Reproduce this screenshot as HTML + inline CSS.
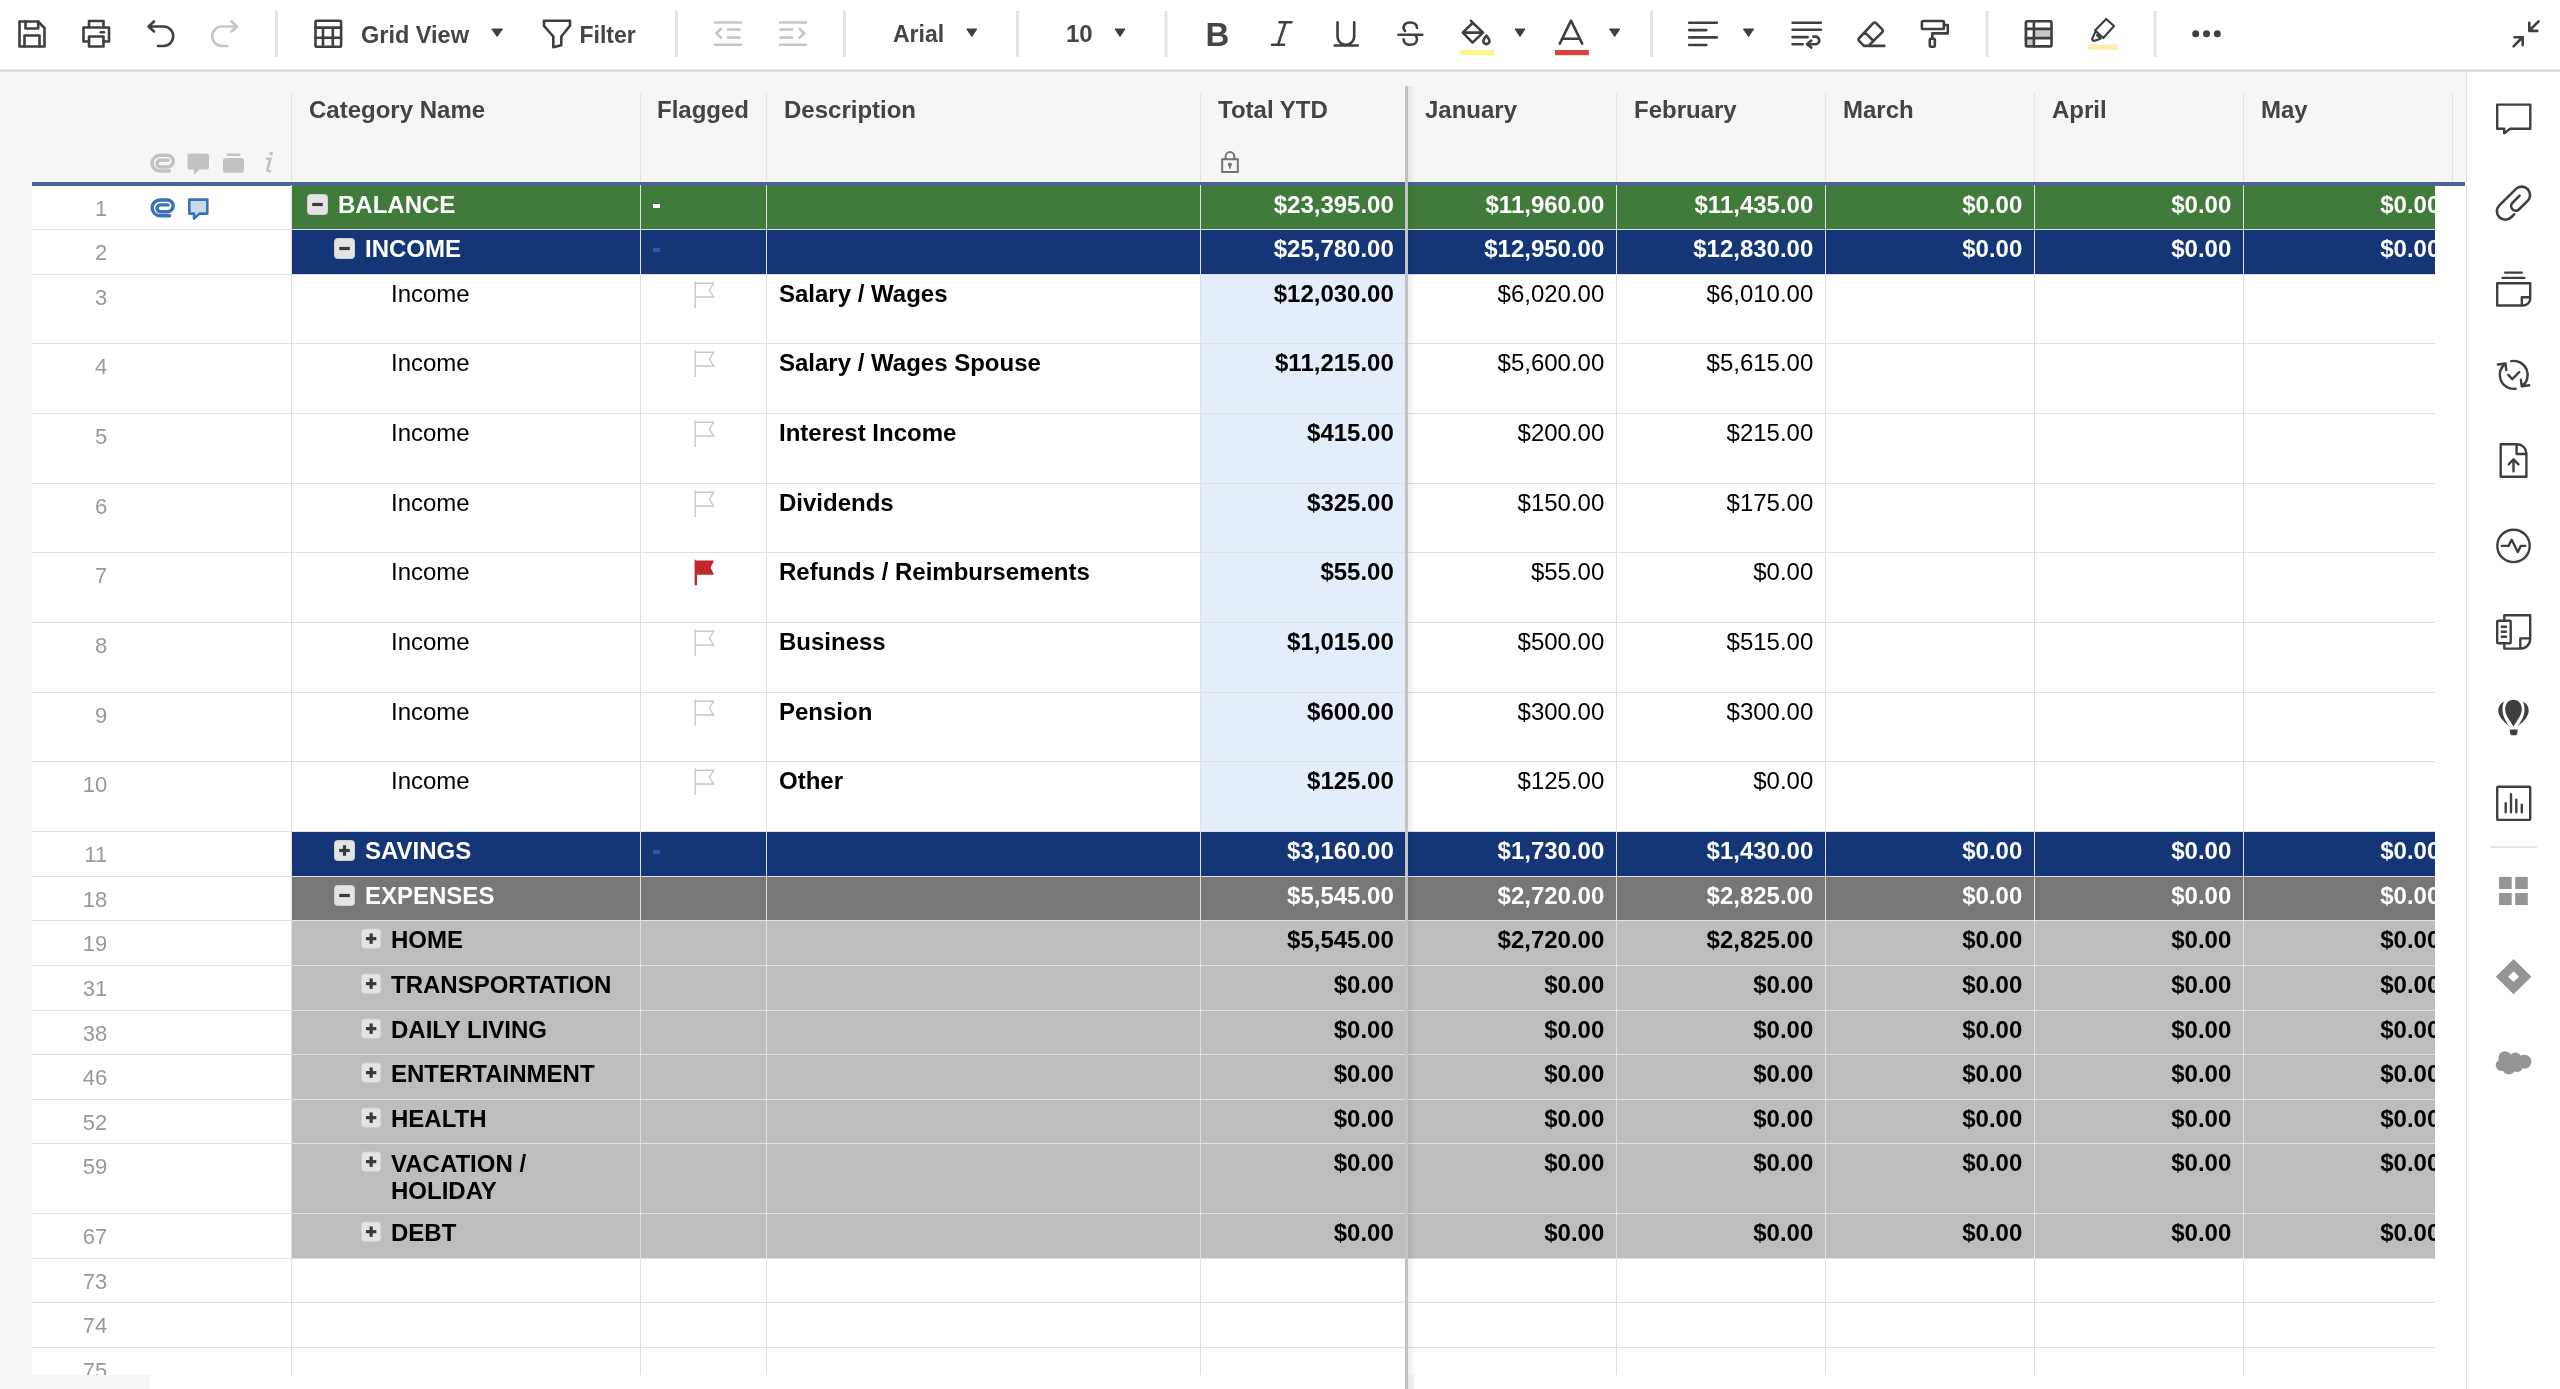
<!DOCTYPE html>
<html><head><meta charset="utf-8"><style>
html,body{margin:0;padding:0;}
body{width:2560px;height:1389px;overflow:hidden;position:relative;background:#fff;font-family:"Liberation Sans",sans-serif;}
#root{position:absolute;left:0;top:0;width:2560px;height:1389px;overflow:hidden;will-change:transform;}
#root>div{position:absolute;}
.t{white-space:nowrap;}
</style></head><body><div id="root">
<div style="left:0px;top:0px;width:2560px;height:70px;background:#ffffff;"></div><div style="left:0px;top:69px;width:2560px;height:1px;background:#ededed;"></div><div style="left:0px;top:70px;width:2560px;height:1px;background:#d3d3d3;"></div><div style="left:0px;top:71px;width:2560px;height:1px;background:#e4e2e0;"></div><div style="left:0px;top:72px;width:2466px;height:1317px;background:#f7f6f4;"></div><div style="left:2466px;top:72px;width:1px;height:1317px;background:#e2e2e2;"></div><div style="left:2467px;top:72px;width:93px;height:1317px;background:#ffffff;"></div><svg style="position:absolute;left:0px;top:0px;" width="2560" height="70" viewBox="0 0 2560 70"><path fill="none" stroke="#3f3f3f" stroke-width="2.6" stroke-linecap="round" stroke-linejoin="round" d="M19.5,21.5 H38 L44.5,28 V46.5 H19.5 Z"/><path fill="none" stroke="#3f3f3f" stroke-width="2.6" stroke-linecap="round" stroke-linejoin="round" d="M25.5,21.5 V28.5 H38.2 V21.5"/><path fill="none" stroke="#3f3f3f" stroke-width="2.6" stroke-linecap="round" stroke-linejoin="round" d="M24.5,46.5 V35.5 H39.5 V46.5"/><path fill="none" stroke="#3f3f3f" stroke-width="2.6" stroke-linecap="round" stroke-linejoin="round" d="M89,27 V21 H103.5 V27"/><path fill="none" stroke="#3f3f3f" stroke-width="2.6" stroke-linecap="round" stroke-linejoin="round" d="M89,41.5 H83.5 V27.5 H109 V41.5 H103.5"/><path fill="none" stroke="#3f3f3f" stroke-width="2.6" stroke-linecap="round" stroke-linejoin="round" d="M89,36.5 H103.5 V46.5 H89 Z"/><path fill="none" stroke="#3f3f3f" stroke-width="2.6" stroke-linecap="round" stroke-linejoin="round" d="M100.8,32.3 H104"/><path fill="none" stroke="#3f3f3f" stroke-width="2.6" stroke-linecap="round" stroke-linejoin="round" d="M154,21.5 L148.5,26.5 L154,31.5 M148.5,26.5 H163.5 A9.7,9.7 0 0 1 163.5,46 H158"/><path fill="none" stroke="#c6c6c6" stroke-width="2.6" stroke-linecap="round" stroke-linejoin="round" d="M231.5,21.5 L237,26.5 L231.5,31.5 M237,26.5 H222 A9.7,9.7 0 0 0 222,46 H227.5"/><rect fill="none" stroke="#3f3f3f" stroke-width="2.6" stroke-linecap="round" stroke-linejoin="round" x="315.5" y="20.8" width="25.6" height="26" rx="1"/><path fill="none" stroke="#3f3f3f" stroke-width="2.6" stroke-linecap="round" stroke-linejoin="round" d="M315.5,27.6 H341 M315.5,37.8 H341 M323,27.6 V46.8 M332.8,27.6 V46.8"/><path fill="none" stroke="#3f3f3f" stroke-width="2.6" stroke-linecap="round" stroke-linejoin="round" d="M544,20.8 H570 V25.8 L561.3,36.5 V45.3 L553.3,47.3 V36.5 L544,25.8 Z"/><path fill="none" stroke="#c6c6c6" stroke-width="2.6" stroke-linecap="round" stroke-linejoin="round" d="M715,22.5 H741 M728,29.5 H739.5 M728,37.6 H739.5 M715,44.7 H741 M721,28.8 L716.3,33.3 L721,37.8"/><path fill="none" stroke="#c6c6c6" stroke-width="2.6" stroke-linecap="round" stroke-linejoin="round" d="M780,22.5 H806 M780.5,29.5 H792 M780.5,37.6 H792 M780,44.7 H806 M799.5,28.8 L804.2,33.3 L799.5,37.8"/><path fill="none" stroke="#3f3f3f" stroke-width="2.6" stroke-linecap="round" stroke-linejoin="round" d="M1279.5,22.3 H1291.5 M1272,44.8 H1284 M1285.5,22.3 L1278,44.8"/><path fill="none" stroke="#3f3f3f" stroke-width="2.6" stroke-linecap="round" stroke-linejoin="round" d="M1337.5,22.3 V36.5 A8.3,8.3 0 0 0 1354.2,36.5 V22.3 M1334.7,45.5 H1357.7"/><path fill="none" stroke="#3f3f3f" stroke-width="2.6" stroke-linecap="round" stroke-linejoin="round" d="M1398.5,34.8 H1422.3"/><path fill="none" stroke="#3f3f3f" stroke-width="2.6" stroke-linecap="round" stroke-linejoin="round" d="M1405,31 C1402.5,28.5 1403,22.5 1410.3,22.5 C1414.8,22.5 1416.8,25 1417,27.8"/><path fill="none" stroke="#3f3f3f" stroke-width="2.6" stroke-linecap="round" stroke-linejoin="round" d="M1403.6,39.4 C1403.6,42.5 1406,44.8 1410.2,44.8 C1414.8,44.8 1417,42.2 1417,39.3 C1417,37.6 1416.6,36.6 1415.8,35.8"/><path fill="none" stroke="#3f3f3f" stroke-width="2.6" stroke-linecap="round" stroke-linejoin="round" d="M1471,20.8 L1473,23 L1483,32.6 L1472.5,42.6 L1462.8,32.6 L1472.8,22.8 M1462.8,32.6 H1483"/><path fill="none" stroke="#3f3f3f" stroke-width="2.6" stroke-linecap="round" stroke-linejoin="round" d="M1486.4,35.6 C1484.5,38 1483.3,39.6 1483.3,41 A3.1,3.1 0 0 0 1489.5,41 C1489.5,39.6 1488.3,38 1486.4,35.6 Z"/><rect x="1460" y="50" width="34.2" height="5.2" fill="#fff68f"/><path fill="none" stroke="#3f3f3f" stroke-width="2.6" stroke-linecap="round" stroke-linejoin="round" d="M1559.8,43.6 L1571,20.6 L1582.2,43.6 M1563,38.7 H1578.8"/><rect x="1555" y="50" width="33.9" height="5.2" fill="#d9443a"/><path fill="none" stroke="#3f3f3f" stroke-width="2.6" stroke-linecap="round" stroke-linejoin="round" d="M1689.2,22.7 H1716.8 M1689.2,30.1 H1706.3 M1689.2,37.4 H1716.8 M1689.2,45 H1706.3"/><path fill="none" stroke="#3f3f3f" stroke-width="2.6" stroke-linecap="round" stroke-linejoin="round" d="M1792.6,22.7 H1820.8 M1792.6,29.8 H1820.8 M1792.6,37.1 H1807.6 M1792.6,44.2 H1802.6"/><path fill="none" stroke="#3f3f3f" stroke-width="2.6" stroke-linecap="round" stroke-linejoin="round" d="M1813.3,36.6 H1815.5 A3.8,3.8 0 0 1 1815.5,44.2 H1807 M1811.3,40.6 L1807,44.2 L1811.3,47.6"/><path fill="none" stroke="#3f3f3f" stroke-width="2.6" stroke-linecap="round" stroke-linejoin="round" d="M1864,45.9 L1859.3,41.2 Q1857.7,39.6 1859.3,38 L1873,23.3 Q1874.6,21.7 1876.2,23.3 L1882,29.1 Q1883.6,30.7 1882,32.3 L1868.5,45.9 M1864,45.9 H1884.3 M1864.8,32.4 L1872.6,40"/><rect fill="none" stroke="#3f3f3f" stroke-width="2.6" stroke-linecap="round" stroke-linejoin="round" x="1921.9" y="21" width="22" height="8" rx="1.3"/><path fill="none" stroke="#3f3f3f" stroke-width="2.6" stroke-linecap="round" stroke-linejoin="round" d="M1944,25 H1947.8 V33.4 H1932.3 V38.6"/><rect fill="none" stroke="#3f3f3f" stroke-width="2.6" stroke-linecap="round" stroke-linejoin="round" x="1929.8" y="38.8" width="5" height="8" rx="1"/><rect x="2035" y="30" width="16.2" height="7.5" fill="#c9c9c9"/><rect x="2026.5" y="39.2" width="7" height="7" fill="#c9c9c9"/><rect fill="none" stroke="#3f3f3f" stroke-width="2.6" stroke-linecap="round" stroke-linejoin="round" x="2025.9" y="21.2" width="25.6" height="25.2" rx="1.3"/><path fill="none" stroke="#3f3f3f" stroke-width="2.6" stroke-linecap="round" stroke-linejoin="round" d="M2025.9,28.9 H2051.5 M2025.9,38.1 H2051.5 M2033.9,21.2 V46.4"/><path fill="none" stroke="#3f3f3f" stroke-width="2.2" stroke-linejoin="round" stroke-linecap="round" d="M2095,30.4 L2106.2,19 L2114,26 L2103.3,38 Z M2095.6,31.4 L2092.2,38.6 Q2092,40.6 2094.6,40.8 L2100.6,38.8 M2097,35.2 L2100,37.6"/><rect x="2088.2" y="44.4" width="29.4" height="5.3" fill="#feedae"/><circle cx="2195.7" cy="33.8" r="3.5" fill="#3f3f3f"/><circle cx="2206.5" cy="33.8" r="3.5" fill="#3f3f3f"/><circle cx="2217.3" cy="33.8" r="3.5" fill="#3f3f3f"/><path fill="none" stroke="#3f3f3f" stroke-width="2.6" stroke-linecap="round" stroke-linejoin="round" d="M2538.6,21.3 L2530,30 M2529.3,22.7 V30.9 H2537.3 M2513.6,46.3 L2522.2,37.5 M2514.5,37.2 H2522.7 V45.1"/><rect x="275.0" y="11" width="3" height="46" fill="#e3e3e3"/><rect x="675.0" y="11" width="3" height="46" fill="#e3e3e3"/><rect x="843.0" y="11" width="3" height="46" fill="#e3e3e3"/><rect x="1016.0" y="11" width="3" height="46" fill="#e3e3e3"/><rect x="1164.5" y="11" width="3" height="46" fill="#e3e3e3"/><rect x="1650.0" y="11" width="3" height="46" fill="#e3e3e3"/><rect x="1985.5" y="11" width="3" height="46" fill="#e3e3e3"/><rect x="2153.5" y="11" width="3" height="46" fill="#e3e3e3"/><path d="M491.8,29 H502.5 L497.15,36.5 Z" fill="#3f3f3f" stroke="#3f3f3f" stroke-width="1" stroke-linejoin="round"/><path d="M966.8,29 H976.8 L971.8,36.5 Z" fill="#3f3f3f" stroke="#3f3f3f" stroke-width="1" stroke-linejoin="round"/><path d="M1115,29 H1125 L1120.0,36.5 Z" fill="#3f3f3f" stroke="#3f3f3f" stroke-width="1" stroke-linejoin="round"/><path d="M1515,29 H1525 L1520.0,36.5 Z" fill="#3f3f3f" stroke="#3f3f3f" stroke-width="1" stroke-linejoin="round"/><path d="M1609.5,29 H1619.8 L1614.65,36.5 Z" fill="#3f3f3f" stroke="#3f3f3f" stroke-width="1" stroke-linejoin="round"/><path d="M1743.4,29 H1753.7 L1748.5500000000002,36.5 Z" fill="#3f3f3f" stroke="#3f3f3f" stroke-width="1" stroke-linejoin="round"/></svg><div class="t" style="left:361px;top:23.90px;font-size:23.5px;line-height:23.5px;font-weight:700;color:#454545;">Grid View</div><div class="t" style="left:579.5px;top:23.53px;font-size:23px;line-height:23px;font-weight:700;color:#454545;">Filter</div><div class="t" style="left:893px;top:22.83px;font-size:23px;line-height:23px;font-weight:700;color:#454545;">Arial</div><div class="t" style="left:1066px;top:22.38px;font-size:24px;line-height:24px;font-weight:700;color:#454545;">10</div><div class="t" style="left:1205.5px;top:18.06px;font-size:33px;line-height:33px;font-weight:700;color:#454545;">B</div><svg style="position:absolute;left:2467px;top:71px;" width="93" height="1318" viewBox="2467 71 93 1318"><path fill="none" stroke="#3f3f3f" stroke-width="2.4" stroke-linecap="round" stroke-linejoin="round" d="M2497.2,104.6 H2530.3 V128.8 H2510.2 L2504.2,133.3 V128.8 H2497.2 Z"/><path fill="none" stroke="#3f3f3f" stroke-width="2.6" stroke-linecap="round" stroke-linejoin="round" d="M2514.2,214.3 L2511.24,217.24 A8.4,8.4 0 0 1 2499.36,205.36 L2515.76,189.06 A8.4,8.4 0 0 1 2527.64,200.94 L2518.85,209.45 A4.6,4.6 0 0 1 2512.35,202.95 L2519.6,195.7"/><path fill="none" stroke="#3f3f3f" stroke-width="2.4" stroke-linecap="round" stroke-linejoin="round" d="M2505.2,272.6 H2521.8 M2502.6,277.9 H2524.3"/><path fill="none" stroke="#3f3f3f" stroke-width="2.4" stroke-linecap="round" stroke-linejoin="round" d="M2497.2,283.2 H2530.2 V298.5 A7,7 0 0 1 2523.3,305.5 H2497.2 Z M2521.8,305.5 V297.3 H2530.2"/><path fill="none" stroke="#3f3f3f" stroke-width="2.4" stroke-linecap="round" stroke-linejoin="round" d="M2511.27,361.11 A14,14 0 0 1 2521.73,386.37 M2520.9,379.8 L2521.73,386.37 L2529.2,385.2"/><path fill="none" stroke="#3f3f3f" stroke-width="2.4" stroke-linecap="round" stroke-linejoin="round" d="M2515.65,388.76 A14,14 0 0 1 2505.57,363.5 M2497.9,364.5 L2505.57,363.5 L2506.3,370.1"/><path fill="none" stroke="#3f3f3f" stroke-width="2.4" stroke-linecap="round" stroke-linejoin="round" d="M2508.3,374.9 L2512.3,379.2 L2519.3,372"/><path fill="none" stroke="#3f3f3f" stroke-width="2.4" stroke-linecap="round" stroke-linejoin="round" d="M2500.7,444.2 H2517 A9.5,9.5 0 0 1 2526.4,453.5 V476.8 H2500.7 Z M2516.6,444.2 V454 H2526.4"/><path fill="none" stroke="#3f3f3f" stroke-width="2.4" stroke-linecap="round" stroke-linejoin="round" d="M2513.5,471.2 V459.5 M2508.8,464.3 L2513.5,459.3 L2518.5,464.3"/><circle fill="none" stroke="#3f3f3f" stroke-width="2.4" stroke-linecap="round" stroke-linejoin="round" cx="2513.5" cy="545.9" r="16.2"/><path fill="none" stroke="#3f3f3f" stroke-width="2.4" stroke-linecap="round" stroke-linejoin="round" d="M2501.8,545.9 H2508.5 L2511.7,539.8 L2517.8,552 L2520.8,545.9 H2525.2"/><path fill="none" stroke="#3f3f3f" stroke-width="2.4" stroke-linecap="round" stroke-linejoin="round" d="M2504.3,620.7 V615.2 H2530.2 V639 A9.6,9.6 0 0 1 2520.6,648.6 H2504.3 V643.3 M2520.3,648.6 V638.4 H2530.2"/><rect fill="none" stroke="#3f3f3f" stroke-width="2.4" stroke-linecap="round" stroke-linejoin="round" x="2497.2" y="620.7" width="13.5" height="22.6" rx="1"/><path fill="none" stroke="#3f3f3f" stroke-width="2.4" stroke-linecap="round" stroke-linejoin="round" d="M2501.8,626.7 H2506 M2501.8,631.8 H2506 M2501.8,636.8 H2506"/><path fill="#3f3f3f" d="M2513.5,699.8 C2508.3,699.8 2505.2,703.8 2505.2,709.3 C2505.2,715.5 2510.3,721 2513.5,726.5 C2516.7,721 2521.8,715.5 2521.8,709.3 C2521.8,703.8 2518.7,699.8 2513.5,699.8 Z"/><path fill="#3f3f3f" d="M2504,701.8 C2499.5,703.8 2498.3,708 2498.3,710.5 C2498.3,716.5 2503.5,721.5 2509.3,726.5 C2505.2,720.5 2502.5,715.5 2502.5,709.8 C2502.5,706.5 2503,704 2504,701.8 Z"/><path fill="#3f3f3f" d="M2523,701.8 C2527.5,703.8 2528.7,708 2528.7,710.5 C2528.7,716.5 2523.5,721.5 2517.7,726.5 C2521.8,720.5 2524.5,715.5 2524.5,709.8 C2524.5,706.5 2524,704 2523,701.8 Z"/><path fill="#3f3f3f" d="M2509.7,729.5 H2517.8 L2517,734 Q2516.6,735.2 2515.4,735.2 H2512 Q2510.6,735.2 2510.4,734 Z"/><rect fill="none" stroke="#3f3f3f" stroke-width="2.4" stroke-linecap="round" stroke-linejoin="round" x="2497.2" y="786.7" width="33" height="33.2" rx="1"/><path fill="none" stroke="#3f3f3f" stroke-width="2.4" stroke-linecap="round" stroke-linejoin="round" d="M2505.7,803.3 V812.3 M2511,794.2 V812.3 M2516.3,799.7 V812.3 M2521.8,804.8 V812.3"/><rect x="2490.5" y="846.3" width="46.4" height="1.6" fill="#e2e2e2"/><rect x="2499.1" y="876.9" width="12.6" height="12.1" fill="#959595"/><rect x="2515.2" y="876.9" width="12.6" height="12.1" fill="#959595"/><rect x="2499.1" y="893" width="12.6" height="12.1" fill="#959595"/><rect x="2515.2" y="893" width="12.6" height="12.1" fill="#959595"/><path fill="#959595" fill-rule="evenodd" d="M2513.6,958.9 L2531.4,976.7 L2513.6,994.3 L2495.8,976.7 Z M2513.6,971.3 L2508.2,976.7 L2513.6,982 L2519,976.7 Z"/><g fill="#959595"><circle cx="2505" cy="1058" r="6.7"/><circle cx="2515.3" cy="1059" r="6.5"/><circle cx="2524.4" cy="1061.8" r="7"/><circle cx="2501.5" cy="1065.3" r="5.7"/><circle cx="2508.8" cy="1067.8" r="6.6"/><circle cx="2517" cy="1066" r="6"/><rect x="2503" y="1058" width="22" height="9"/></g></svg><div class="t" style="left:309px;top:98.18px;font-size:24px;line-height:24px;font-weight:700;color:#444444;">Category Name</div><div class="t" style="left:657px;top:98.18px;font-size:24px;line-height:24px;font-weight:700;color:#444444;">Flagged</div><div class="t" style="left:784px;top:98.18px;font-size:24px;line-height:24px;font-weight:700;color:#444444;">Description</div><div class="t" style="left:1218px;top:98.18px;font-size:24px;line-height:24px;font-weight:700;color:#444444;">Total YTD</div><div class="t" style="left:1425px;top:98.18px;font-size:24px;line-height:24px;font-weight:700;color:#444444;">January</div><div class="t" style="left:1634px;top:98.18px;font-size:24px;line-height:24px;font-weight:700;color:#444444;">February</div><div class="t" style="left:1843px;top:98.18px;font-size:24px;line-height:24px;font-weight:700;color:#444444;">March</div><div class="t" style="left:2052px;top:98.18px;font-size:24px;line-height:24px;font-weight:700;color:#444444;">April</div><div class="t" style="left:2261px;top:98.18px;font-size:24px;line-height:24px;font-weight:700;color:#444444;">May</div><div style="left:291px;top:93px;width:1px;height:89px;background:#e4e4e4;"></div><div style="left:640px;top:93px;width:1px;height:89px;background:#e4e4e4;"></div><div style="left:766px;top:93px;width:1px;height:89px;background:#e4e4e4;"></div><div style="left:1200px;top:93px;width:1px;height:89px;background:#e4e4e4;"></div><div style="left:1616px;top:93px;width:1px;height:89px;background:#e4e4e4;"></div><div style="left:1825px;top:93px;width:1px;height:89px;background:#e4e4e4;"></div><div style="left:2034px;top:93px;width:1px;height:89px;background:#e4e4e4;"></div><div style="left:2243px;top:93px;width:1px;height:89px;background:#e4e4e4;"></div><div style="left:2452px;top:93px;width:1px;height:89px;background:#e4e4e4;"></div><svg style="position:absolute;left:32px;top:71px;" width="1400" height="160" viewBox="32 71 1400 160"><path fill="none" stroke="#c2c2c2" stroke-width="3.4" stroke-linecap="round" d="M169.5,171 H159.95 A7.85,7.85 0 0 1 159.95,155.3 H167.35 A5.85,5.85 0 0 1 167.35,167 H160.4 A3.4,3.4 0 0 1 160.4,160.2 H168"/><path fill="#c2c2c2" d="M189.8,153.6 H206.8 Q209,153.6 209,155.8 V167.3 Q209,169.5 206.8,169.5 H199.5 L193.8,174.8 V169.5 H189.8 Q187.5,169.5 187.5,167.3 V155.8 Q187.5,153.6 189.8,153.6 Z"/><rect x="226.7" y="153.6" width="13.7" height="2.4" rx="1" fill="#c2c2c2"/><rect x="223" y="158" width="21" height="14.8" rx="2.6" fill="#c2c2c2"/><circle cx="271.2" cy="153.5" r="1.8" fill="#c2c2c2"/><path fill="none" stroke="#c2c2c2" stroke-width="2.6" stroke-linecap="round" d="M267,158.8 H270.3 L267.6,169 Q267.2,171.6 270,171.2"/><path fill="none" stroke="#737373" stroke-width="2" d="M1222.2,159.2 H1237.8 V171.9 H1222.2 Z M1225.6,159.2 V156.5 A4.4,4.4 0 0 1 1234.4,156.5 V159.2"/><circle cx="1229.9" cy="164.5" r="2" fill="#737373"/><path fill="#737373" d="M1228.8,165 H1231 L1230.6,168.8 H1229.2 Z"/></svg><div style="left:32px;top:182px;width:2433px;height:4px;background:#4b6496;"></div><div style="left:32px;top:186px;width:2403px;height:1189px;background:#ffffff;"></div><div class="t" style="right:2452.8px;top:197.87px;font-size:22px;line-height:22px;font-weight:400;color:#999999;text-align:right;">1</div><div style="left:292px;top:186px;width:2143px;height:43px;background:#417b3b;"></div><div class="t" style="left:338px;top:193.38px;font-size:24px;line-height:24px;font-weight:700;color:#ffffff;">BALANCE</div><div style="left:652.5px;top:204.3px;width:7.5px;height:3.8px;background:#ffffff;"></div><div class="t" style="right:1166.2px;top:193.38px;font-size:24px;line-height:24px;font-weight:700;color:#ffffff;text-align:right;">$23,395.00</div><div class="t" style="right:955.7px;top:193.38px;font-size:24px;line-height:24px;font-weight:700;color:#ffffff;text-align:right;">$11,960.00</div><div class="t" style="right:746.7px;top:193.38px;font-size:24px;line-height:24px;font-weight:700;color:#ffffff;text-align:right;">$11,435.00</div><div class="t" style="right:537.7px;top:193.38px;font-size:24px;line-height:24px;font-weight:700;color:#ffffff;text-align:right;">$0.00</div><div class="t" style="right:328.6999999999998px;top:193.38px;font-size:24px;line-height:24px;font-weight:700;color:#ffffff;text-align:right;">$0.00</div><div class="t" style="right:119.69999999999982px;top:193.38px;font-size:24px;line-height:24px;font-weight:700;color:#ffffff;text-align:right;">$0.00</div><div style="left:32px;top:229px;width:2403px;height:1px;background:#e0e0e0;"></div><div class="t" style="right:2452.8px;top:241.87px;font-size:22px;line-height:22px;font-weight:400;color:#999999;text-align:right;">2</div><div style="left:292px;top:230px;width:2143px;height:44px;background:#143677;"></div><div class="t" style="left:365px;top:237.38px;font-size:24px;line-height:24px;font-weight:700;color:#ffffff;">INCOME</div><div style="left:652.5px;top:248.3px;width:7.5px;height:3.8px;background:#2459b3;"></div><div class="t" style="right:1166.2px;top:237.38px;font-size:24px;line-height:24px;font-weight:700;color:#ffffff;text-align:right;">$25,780.00</div><div class="t" style="right:955.7px;top:237.38px;font-size:24px;line-height:24px;font-weight:700;color:#ffffff;text-align:right;">$12,950.00</div><div class="t" style="right:746.7px;top:237.38px;font-size:24px;line-height:24px;font-weight:700;color:#ffffff;text-align:right;">$12,830.00</div><div class="t" style="right:537.7px;top:237.38px;font-size:24px;line-height:24px;font-weight:700;color:#ffffff;text-align:right;">$0.00</div><div class="t" style="right:328.6999999999998px;top:237.38px;font-size:24px;line-height:24px;font-weight:700;color:#ffffff;text-align:right;">$0.00</div><div class="t" style="right:119.69999999999982px;top:237.38px;font-size:24px;line-height:24px;font-weight:700;color:#ffffff;text-align:right;">$0.00</div><div style="left:32px;top:274px;width:2403px;height:1px;background:#e0e0e0;"></div><div class="t" style="right:2452.8px;top:286.87px;font-size:22px;line-height:22px;font-weight:400;color:#999999;text-align:right;">3</div><div style="left:1201px;top:275px;width:204px;height:68px;background:#e3eefa;"></div><div class="t" style="left:391px;top:282.38px;font-size:24px;line-height:24px;font-weight:400;color:#000000;">Income</div><div class="t" style="left:779px;top:282.38px;font-size:24px;line-height:24px;font-weight:700;color:#000000;">Salary / Wages</div><div class="t" style="right:1166.2px;top:282.38px;font-size:24px;line-height:24px;font-weight:700;color:#000000;text-align:right;">$12,030.00</div><div class="t" style="right:955.7px;top:282.38px;font-size:24px;line-height:24px;font-weight:400;color:#000000;text-align:right;">$6,020.00</div><div class="t" style="right:746.7px;top:282.38px;font-size:24px;line-height:24px;font-weight:400;color:#000000;text-align:right;">$6,010.00</div><div style="left:32px;top:343px;width:2403px;height:1px;background:#e0e0e0;"></div><div class="t" style="right:2452.8px;top:355.87px;font-size:22px;line-height:22px;font-weight:400;color:#999999;text-align:right;">4</div><div style="left:1201px;top:344px;width:204px;height:69px;background:#e3eefa;"></div><div class="t" style="left:391px;top:351.38px;font-size:24px;line-height:24px;font-weight:400;color:#000000;">Income</div><div class="t" style="left:779px;top:351.38px;font-size:24px;line-height:24px;font-weight:700;color:#000000;">Salary / Wages Spouse</div><div class="t" style="right:1166.2px;top:351.38px;font-size:24px;line-height:24px;font-weight:700;color:#000000;text-align:right;">$11,215.00</div><div class="t" style="right:955.7px;top:351.38px;font-size:24px;line-height:24px;font-weight:400;color:#000000;text-align:right;">$5,600.00</div><div class="t" style="right:746.7px;top:351.38px;font-size:24px;line-height:24px;font-weight:400;color:#000000;text-align:right;">$5,615.00</div><div style="left:32px;top:413px;width:2403px;height:1px;background:#e0e0e0;"></div><div class="t" style="right:2452.8px;top:425.87px;font-size:22px;line-height:22px;font-weight:400;color:#999999;text-align:right;">5</div><div style="left:1201px;top:414px;width:204px;height:69px;background:#e3eefa;"></div><div class="t" style="left:391px;top:421.38px;font-size:24px;line-height:24px;font-weight:400;color:#000000;">Income</div><div class="t" style="left:779px;top:421.38px;font-size:24px;line-height:24px;font-weight:700;color:#000000;">Interest Income</div><div class="t" style="right:1166.2px;top:421.38px;font-size:24px;line-height:24px;font-weight:700;color:#000000;text-align:right;">$415.00</div><div class="t" style="right:955.7px;top:421.38px;font-size:24px;line-height:24px;font-weight:400;color:#000000;text-align:right;">$200.00</div><div class="t" style="right:746.7px;top:421.38px;font-size:24px;line-height:24px;font-weight:400;color:#000000;text-align:right;">$215.00</div><div style="left:32px;top:483px;width:2403px;height:1px;background:#e0e0e0;"></div><div class="t" style="right:2452.8px;top:495.87px;font-size:22px;line-height:22px;font-weight:400;color:#999999;text-align:right;">6</div><div style="left:1201px;top:484px;width:204px;height:68px;background:#e3eefa;"></div><div class="t" style="left:391px;top:491.38px;font-size:24px;line-height:24px;font-weight:400;color:#000000;">Income</div><div class="t" style="left:779px;top:491.38px;font-size:24px;line-height:24px;font-weight:700;color:#000000;">Dividends</div><div class="t" style="right:1166.2px;top:491.38px;font-size:24px;line-height:24px;font-weight:700;color:#000000;text-align:right;">$325.00</div><div class="t" style="right:955.7px;top:491.38px;font-size:24px;line-height:24px;font-weight:400;color:#000000;text-align:right;">$150.00</div><div class="t" style="right:746.7px;top:491.38px;font-size:24px;line-height:24px;font-weight:400;color:#000000;text-align:right;">$175.00</div><div style="left:32px;top:552px;width:2403px;height:1px;background:#e0e0e0;"></div><div class="t" style="right:2452.8px;top:564.87px;font-size:22px;line-height:22px;font-weight:400;color:#999999;text-align:right;">7</div><div style="left:1201px;top:553px;width:204px;height:69px;background:#e3eefa;"></div><div class="t" style="left:391px;top:560.38px;font-size:24px;line-height:24px;font-weight:400;color:#000000;">Income</div><div class="t" style="left:779px;top:560.38px;font-size:24px;line-height:24px;font-weight:700;color:#000000;">Refunds / Reimbursements</div><div class="t" style="right:1166.2px;top:560.38px;font-size:24px;line-height:24px;font-weight:700;color:#000000;text-align:right;">$55.00</div><div class="t" style="right:955.7px;top:560.38px;font-size:24px;line-height:24px;font-weight:400;color:#000000;text-align:right;">$55.00</div><div class="t" style="right:746.7px;top:560.38px;font-size:24px;line-height:24px;font-weight:400;color:#000000;text-align:right;">$0.00</div><div style="left:32px;top:622px;width:2403px;height:1px;background:#e0e0e0;"></div><div class="t" style="right:2452.8px;top:634.87px;font-size:22px;line-height:22px;font-weight:400;color:#999999;text-align:right;">8</div><div style="left:1201px;top:623px;width:204px;height:69px;background:#e3eefa;"></div><div class="t" style="left:391px;top:630.38px;font-size:24px;line-height:24px;font-weight:400;color:#000000;">Income</div><div class="t" style="left:779px;top:630.38px;font-size:24px;line-height:24px;font-weight:700;color:#000000;">Business</div><div class="t" style="right:1166.2px;top:630.38px;font-size:24px;line-height:24px;font-weight:700;color:#000000;text-align:right;">$1,015.00</div><div class="t" style="right:955.7px;top:630.38px;font-size:24px;line-height:24px;font-weight:400;color:#000000;text-align:right;">$500.00</div><div class="t" style="right:746.7px;top:630.38px;font-size:24px;line-height:24px;font-weight:400;color:#000000;text-align:right;">$515.00</div><div style="left:32px;top:692px;width:2403px;height:1px;background:#e0e0e0;"></div><div class="t" style="right:2452.8px;top:704.87px;font-size:22px;line-height:22px;font-weight:400;color:#999999;text-align:right;">9</div><div style="left:1201px;top:693px;width:204px;height:68px;background:#e3eefa;"></div><div class="t" style="left:391px;top:700.38px;font-size:24px;line-height:24px;font-weight:400;color:#000000;">Income</div><div class="t" style="left:779px;top:700.38px;font-size:24px;line-height:24px;font-weight:700;color:#000000;">Pension</div><div class="t" style="right:1166.2px;top:700.38px;font-size:24px;line-height:24px;font-weight:700;color:#000000;text-align:right;">$600.00</div><div class="t" style="right:955.7px;top:700.38px;font-size:24px;line-height:24px;font-weight:400;color:#000000;text-align:right;">$300.00</div><div class="t" style="right:746.7px;top:700.38px;font-size:24px;line-height:24px;font-weight:400;color:#000000;text-align:right;">$300.00</div><div style="left:32px;top:761px;width:2403px;height:1px;background:#e0e0e0;"></div><div class="t" style="right:2452.8px;top:773.87px;font-size:22px;line-height:22px;font-weight:400;color:#999999;text-align:right;">10</div><div style="left:1201px;top:762px;width:204px;height:69px;background:#e3eefa;"></div><div class="t" style="left:391px;top:769.38px;font-size:24px;line-height:24px;font-weight:400;color:#000000;">Income</div><div class="t" style="left:779px;top:769.38px;font-size:24px;line-height:24px;font-weight:700;color:#000000;">Other</div><div class="t" style="right:1166.2px;top:769.38px;font-size:24px;line-height:24px;font-weight:700;color:#000000;text-align:right;">$125.00</div><div class="t" style="right:955.7px;top:769.38px;font-size:24px;line-height:24px;font-weight:400;color:#000000;text-align:right;">$125.00</div><div class="t" style="right:746.7px;top:769.38px;font-size:24px;line-height:24px;font-weight:400;color:#000000;text-align:right;">$0.00</div><div style="left:32px;top:831px;width:2403px;height:1px;background:#e0e0e0;"></div><div class="t" style="right:2452.8px;top:843.87px;font-size:22px;line-height:22px;font-weight:400;color:#999999;text-align:right;">11</div><div style="left:292px;top:832px;width:2143px;height:44px;background:#143677;"></div><div class="t" style="left:365px;top:839.38px;font-size:24px;line-height:24px;font-weight:700;color:#ffffff;">SAVINGS</div><div style="left:652.5px;top:850.3px;width:7.5px;height:3.8px;background:#2459b3;"></div><div class="t" style="right:1166.2px;top:839.38px;font-size:24px;line-height:24px;font-weight:700;color:#ffffff;text-align:right;">$3,160.00</div><div class="t" style="right:955.7px;top:839.38px;font-size:24px;line-height:24px;font-weight:700;color:#ffffff;text-align:right;">$1,730.00</div><div class="t" style="right:746.7px;top:839.38px;font-size:24px;line-height:24px;font-weight:700;color:#ffffff;text-align:right;">$1,430.00</div><div class="t" style="right:537.7px;top:839.38px;font-size:24px;line-height:24px;font-weight:700;color:#ffffff;text-align:right;">$0.00</div><div class="t" style="right:328.6999999999998px;top:839.38px;font-size:24px;line-height:24px;font-weight:700;color:#ffffff;text-align:right;">$0.00</div><div class="t" style="right:119.69999999999982px;top:839.38px;font-size:24px;line-height:24px;font-weight:700;color:#ffffff;text-align:right;">$0.00</div><div style="left:32px;top:876px;width:2403px;height:1px;background:#e0e0e0;"></div><div class="t" style="right:2452.8px;top:888.87px;font-size:22px;line-height:22px;font-weight:400;color:#999999;text-align:right;">18</div><div style="left:292px;top:877px;width:2143px;height:43px;background:#777777;"></div><div class="t" style="left:365px;top:884.38px;font-size:24px;line-height:24px;font-weight:700;color:#ffffff;">EXPENSES</div><div class="t" style="right:1166.2px;top:884.38px;font-size:24px;line-height:24px;font-weight:700;color:#ffffff;text-align:right;">$5,545.00</div><div class="t" style="right:955.7px;top:884.38px;font-size:24px;line-height:24px;font-weight:700;color:#ffffff;text-align:right;">$2,720.00</div><div class="t" style="right:746.7px;top:884.38px;font-size:24px;line-height:24px;font-weight:700;color:#ffffff;text-align:right;">$2,825.00</div><div class="t" style="right:537.7px;top:884.38px;font-size:24px;line-height:24px;font-weight:700;color:#ffffff;text-align:right;">$0.00</div><div class="t" style="right:328.6999999999998px;top:884.38px;font-size:24px;line-height:24px;font-weight:700;color:#ffffff;text-align:right;">$0.00</div><div class="t" style="right:119.69999999999982px;top:884.38px;font-size:24px;line-height:24px;font-weight:700;color:#ffffff;text-align:right;">$0.00</div><div style="left:32px;top:920px;width:2403px;height:1px;background:#e0e0e0;"></div><div class="t" style="right:2452.8px;top:932.87px;font-size:22px;line-height:22px;font-weight:400;color:#999999;text-align:right;">19</div><div style="left:292px;top:921px;width:2143px;height:44px;background:#bdbdbd;"></div><div class="t" style="left:391px;top:928.38px;font-size:24px;line-height:24px;font-weight:700;color:#000000;">HOME</div><div class="t" style="right:1166.2px;top:928.38px;font-size:24px;line-height:24px;font-weight:700;color:#000000;text-align:right;">$5,545.00</div><div class="t" style="right:955.7px;top:928.38px;font-size:24px;line-height:24px;font-weight:700;color:#000000;text-align:right;">$2,720.00</div><div class="t" style="right:746.7px;top:928.38px;font-size:24px;line-height:24px;font-weight:700;color:#000000;text-align:right;">$2,825.00</div><div class="t" style="right:537.7px;top:928.38px;font-size:24px;line-height:24px;font-weight:700;color:#000000;text-align:right;">$0.00</div><div class="t" style="right:328.6999999999998px;top:928.38px;font-size:24px;line-height:24px;font-weight:700;color:#000000;text-align:right;">$0.00</div><div class="t" style="right:119.69999999999982px;top:928.38px;font-size:24px;line-height:24px;font-weight:700;color:#000000;text-align:right;">$0.00</div><div style="left:32px;top:965px;width:2403px;height:1px;background:#e0e0e0;"></div><div class="t" style="right:2452.8px;top:977.87px;font-size:22px;line-height:22px;font-weight:400;color:#999999;text-align:right;">31</div><div style="left:292px;top:966px;width:2143px;height:44px;background:#bdbdbd;"></div><div class="t" style="left:391px;top:973.38px;font-size:24px;line-height:24px;font-weight:700;color:#000000;">TRANSPORTATION</div><div class="t" style="right:1166.2px;top:973.38px;font-size:24px;line-height:24px;font-weight:700;color:#000000;text-align:right;">$0.00</div><div class="t" style="right:955.7px;top:973.38px;font-size:24px;line-height:24px;font-weight:700;color:#000000;text-align:right;">$0.00</div><div class="t" style="right:746.7px;top:973.38px;font-size:24px;line-height:24px;font-weight:700;color:#000000;text-align:right;">$0.00</div><div class="t" style="right:537.7px;top:973.38px;font-size:24px;line-height:24px;font-weight:700;color:#000000;text-align:right;">$0.00</div><div class="t" style="right:328.6999999999998px;top:973.38px;font-size:24px;line-height:24px;font-weight:700;color:#000000;text-align:right;">$0.00</div><div class="t" style="right:119.69999999999982px;top:973.38px;font-size:24px;line-height:24px;font-weight:700;color:#000000;text-align:right;">$0.00</div><div style="left:32px;top:1010px;width:2403px;height:1px;background:#e0e0e0;"></div><div class="t" style="right:2452.8px;top:1022.87px;font-size:22px;line-height:22px;font-weight:400;color:#999999;text-align:right;">38</div><div style="left:292px;top:1011px;width:2143px;height:43px;background:#bdbdbd;"></div><div class="t" style="left:391px;top:1018.38px;font-size:24px;line-height:24px;font-weight:700;color:#000000;">DAILY LIVING</div><div class="t" style="right:1166.2px;top:1018.38px;font-size:24px;line-height:24px;font-weight:700;color:#000000;text-align:right;">$0.00</div><div class="t" style="right:955.7px;top:1018.38px;font-size:24px;line-height:24px;font-weight:700;color:#000000;text-align:right;">$0.00</div><div class="t" style="right:746.7px;top:1018.38px;font-size:24px;line-height:24px;font-weight:700;color:#000000;text-align:right;">$0.00</div><div class="t" style="right:537.7px;top:1018.38px;font-size:24px;line-height:24px;font-weight:700;color:#000000;text-align:right;">$0.00</div><div class="t" style="right:328.6999999999998px;top:1018.38px;font-size:24px;line-height:24px;font-weight:700;color:#000000;text-align:right;">$0.00</div><div class="t" style="right:119.69999999999982px;top:1018.38px;font-size:24px;line-height:24px;font-weight:700;color:#000000;text-align:right;">$0.00</div><div style="left:32px;top:1054px;width:2403px;height:1px;background:#e0e0e0;"></div><div class="t" style="right:2452.8px;top:1066.87px;font-size:22px;line-height:22px;font-weight:400;color:#999999;text-align:right;">46</div><div style="left:292px;top:1055px;width:2143px;height:44px;background:#bdbdbd;"></div><div class="t" style="left:391px;top:1062.38px;font-size:24px;line-height:24px;font-weight:700;color:#000000;">ENTERTAINMENT</div><div class="t" style="right:1166.2px;top:1062.38px;font-size:24px;line-height:24px;font-weight:700;color:#000000;text-align:right;">$0.00</div><div class="t" style="right:955.7px;top:1062.38px;font-size:24px;line-height:24px;font-weight:700;color:#000000;text-align:right;">$0.00</div><div class="t" style="right:746.7px;top:1062.38px;font-size:24px;line-height:24px;font-weight:700;color:#000000;text-align:right;">$0.00</div><div class="t" style="right:537.7px;top:1062.38px;font-size:24px;line-height:24px;font-weight:700;color:#000000;text-align:right;">$0.00</div><div class="t" style="right:328.6999999999998px;top:1062.38px;font-size:24px;line-height:24px;font-weight:700;color:#000000;text-align:right;">$0.00</div><div class="t" style="right:119.69999999999982px;top:1062.38px;font-size:24px;line-height:24px;font-weight:700;color:#000000;text-align:right;">$0.00</div><div style="left:32px;top:1099px;width:2403px;height:1px;background:#e0e0e0;"></div><div class="t" style="right:2452.8px;top:1111.87px;font-size:22px;line-height:22px;font-weight:400;color:#999999;text-align:right;">52</div><div style="left:292px;top:1100px;width:2143px;height:43px;background:#bdbdbd;"></div><div class="t" style="left:391px;top:1107.38px;font-size:24px;line-height:24px;font-weight:700;color:#000000;">HEALTH</div><div class="t" style="right:1166.2px;top:1107.38px;font-size:24px;line-height:24px;font-weight:700;color:#000000;text-align:right;">$0.00</div><div class="t" style="right:955.7px;top:1107.38px;font-size:24px;line-height:24px;font-weight:700;color:#000000;text-align:right;">$0.00</div><div class="t" style="right:746.7px;top:1107.38px;font-size:24px;line-height:24px;font-weight:700;color:#000000;text-align:right;">$0.00</div><div class="t" style="right:537.7px;top:1107.38px;font-size:24px;line-height:24px;font-weight:700;color:#000000;text-align:right;">$0.00</div><div class="t" style="right:328.6999999999998px;top:1107.38px;font-size:24px;line-height:24px;font-weight:700;color:#000000;text-align:right;">$0.00</div><div class="t" style="right:119.69999999999982px;top:1107.38px;font-size:24px;line-height:24px;font-weight:700;color:#000000;text-align:right;">$0.00</div><div style="left:32px;top:1143px;width:2403px;height:1px;background:#e0e0e0;"></div><div class="t" style="right:2452.8px;top:1155.87px;font-size:22px;line-height:22px;font-weight:400;color:#999999;text-align:right;">59</div><div style="left:292px;top:1144px;width:2143px;height:69px;background:#bdbdbd;"></div><div class="t" style="left:391px;top:1149.73px;font-size:24px;line-height:27.3px;font-weight:700;color:#000">VACATION /<br>HOLIDAY</div><div class="t" style="right:1166.2px;top:1151.38px;font-size:24px;line-height:24px;font-weight:700;color:#000000;text-align:right;">$0.00</div><div class="t" style="right:955.7px;top:1151.38px;font-size:24px;line-height:24px;font-weight:700;color:#000000;text-align:right;">$0.00</div><div class="t" style="right:746.7px;top:1151.38px;font-size:24px;line-height:24px;font-weight:700;color:#000000;text-align:right;">$0.00</div><div class="t" style="right:537.7px;top:1151.38px;font-size:24px;line-height:24px;font-weight:700;color:#000000;text-align:right;">$0.00</div><div class="t" style="right:328.6999999999998px;top:1151.38px;font-size:24px;line-height:24px;font-weight:700;color:#000000;text-align:right;">$0.00</div><div class="t" style="right:119.69999999999982px;top:1151.38px;font-size:24px;line-height:24px;font-weight:700;color:#000000;text-align:right;">$0.00</div><div style="left:32px;top:1213px;width:2403px;height:1px;background:#e0e0e0;"></div><div class="t" style="right:2452.8px;top:1225.87px;font-size:22px;line-height:22px;font-weight:400;color:#999999;text-align:right;">67</div><div style="left:292px;top:1214px;width:2143px;height:44px;background:#bdbdbd;"></div><div class="t" style="left:391px;top:1221.38px;font-size:24px;line-height:24px;font-weight:700;color:#000000;">DEBT</div><div class="t" style="right:1166.2px;top:1221.38px;font-size:24px;line-height:24px;font-weight:700;color:#000000;text-align:right;">$0.00</div><div class="t" style="right:955.7px;top:1221.38px;font-size:24px;line-height:24px;font-weight:700;color:#000000;text-align:right;">$0.00</div><div class="t" style="right:746.7px;top:1221.38px;font-size:24px;line-height:24px;font-weight:700;color:#000000;text-align:right;">$0.00</div><div class="t" style="right:537.7px;top:1221.38px;font-size:24px;line-height:24px;font-weight:700;color:#000000;text-align:right;">$0.00</div><div class="t" style="right:328.6999999999998px;top:1221.38px;font-size:24px;line-height:24px;font-weight:700;color:#000000;text-align:right;">$0.00</div><div class="t" style="right:119.69999999999982px;top:1221.38px;font-size:24px;line-height:24px;font-weight:700;color:#000000;text-align:right;">$0.00</div><div style="left:32px;top:1258px;width:2403px;height:1px;background:#e0e0e0;"></div><div class="t" style="right:2452.8px;top:1270.87px;font-size:22px;line-height:22px;font-weight:400;color:#999999;text-align:right;">73</div><div style="left:32px;top:1302px;width:2403px;height:1px;background:#e0e0e0;"></div><div class="t" style="right:2452.8px;top:1314.87px;font-size:22px;line-height:22px;font-weight:400;color:#999999;text-align:right;">74</div><div style="left:32px;top:1347px;width:2403px;height:1px;background:#e0e0e0;"></div><div class="t" style="right:2452.8px;top:1359.87px;font-size:22px;line-height:22px;font-weight:400;color:#999999;text-align:right;">75</div><div style="left:2435px;top:186px;width:31px;height:1189px;background:#ffffff;"></div><div style="left:291px;top:185px;width:1px;height:1190px;background:#e0e0e0;"></div><div style="left:640px;top:185px;width:1px;height:1190px;background:#e0e0e0;"></div><div style="left:766px;top:185px;width:1px;height:1190px;background:#e0e0e0;"></div><div style="left:1200px;top:185px;width:1px;height:1190px;background:#e0e0e0;"></div><div style="left:1616px;top:185px;width:1px;height:1190px;background:#e0e0e0;"></div><div style="left:1825px;top:185px;width:1px;height:1190px;background:#e0e0e0;"></div><div style="left:2034px;top:185px;width:1px;height:1190px;background:#e0e0e0;"></div><div style="left:2243px;top:185px;width:1px;height:1190px;background:#e0e0e0;"></div><div style="left:1405px;top:86px;width:3px;height:1303px;background:#c2c2c2;"></div><div style="left:1408px;top:86px;width:8px;height:1303px;background:linear-gradient(to right, rgba(0,0,0,0.07), rgba(0,0,0,0));"></div><svg style="position:absolute;left:290px;top:185px;" width="440" height="1190" viewBox="290 185 440 1190"><rect x="307.5" y="194.5" width="20" height="20" rx="3" fill="#e4e4e4" stroke="#cfcfcf" stroke-width="1"/><path d="M312.2,204.5 H322.8" stroke="#3a3a3a" stroke-width="3.2"/><rect x="334.5" y="238.5" width="20" height="20" rx="3" fill="#e4e4e4" stroke="#cfcfcf" stroke-width="1"/><path d="M339.2,248.5 H349.8" stroke="#3a3a3a" stroke-width="3.2"/><path fill="none" stroke="#c8c8c8" stroke-width="1.4" d="M695.2,281.6 V308.0 M695.2,283.3 H713.5 L709.5,290.2 L713.5,297.0 H695.2"/><path fill="none" stroke="#c8c8c8" stroke-width="1.4" d="M695.2,350.6 V377.0 M695.2,352.3 H713.5 L709.5,359.2 L713.5,366.0 H695.2"/><path fill="none" stroke="#c8c8c8" stroke-width="1.4" d="M695.2,420.6 V447.0 M695.2,422.3 H713.5 L709.5,429.2 L713.5,436.0 H695.2"/><path fill="none" stroke="#c8c8c8" stroke-width="1.4" d="M695.2,490.6 V517.0 M695.2,492.3 H713.5 L709.5,499.2 L713.5,506.0 H695.2"/><path fill="#c0272a" d="M695.8,560.6 H714 L710.6,567.7 L714,574.8 H697 V585.3 H694.6 V559.0 Z"/><path fill="none" stroke="#c8c8c8" stroke-width="1.4" d="M695.2,629.6 V656.0 M695.2,631.3 H713.5 L709.5,638.2 L713.5,645.0 H695.2"/><path fill="none" stroke="#c8c8c8" stroke-width="1.4" d="M695.2,699.6 V726.0 M695.2,701.3 H713.5 L709.5,708.2 L713.5,715.0 H695.2"/><path fill="none" stroke="#c8c8c8" stroke-width="1.4" d="M695.2,768.6 V795.0 M695.2,770.3 H713.5 L709.5,777.2 L713.5,784.0 H695.2"/><rect x="334.5" y="840.5" width="20" height="20" rx="3" fill="#e4e4e4" stroke="#cfcfcf" stroke-width="1"/><path d="M339.2,850.5 H349.8" stroke="#3a3a3a" stroke-width="3.2"/><path d="M344.5,845.2 V855.8" stroke="#3a3a3a" stroke-width="3.2"/><rect x="334.5" y="885.5" width="20" height="20" rx="3" fill="#e4e4e4" stroke="#cfcfcf" stroke-width="1"/><path d="M339.2,895.5 H349.8" stroke="#3a3a3a" stroke-width="3.2"/><rect x="361.5" y="929.0" width="19.3" height="19.3" rx="3" fill="#e4e4e4" stroke="#cfcfcf" stroke-width="1"/><path d="M365.95,938.65 H376.34999999999997" stroke="#3a3a3a" stroke-width="3.2"/><path d="M371.15,933.4499999999999 V943.85" stroke="#3a3a3a" stroke-width="3.2"/><rect x="361.5" y="974.0" width="19.3" height="19.3" rx="3" fill="#e4e4e4" stroke="#cfcfcf" stroke-width="1"/><path d="M365.95,983.65 H376.34999999999997" stroke="#3a3a3a" stroke-width="3.2"/><path d="M371.15,978.4499999999999 V988.85" stroke="#3a3a3a" stroke-width="3.2"/><rect x="361.5" y="1019.0" width="19.3" height="19.3" rx="3" fill="#e4e4e4" stroke="#cfcfcf" stroke-width="1"/><path d="M365.95,1028.65 H376.34999999999997" stroke="#3a3a3a" stroke-width="3.2"/><path d="M371.15,1023.45 V1033.8500000000001" stroke="#3a3a3a" stroke-width="3.2"/><rect x="361.5" y="1063.0" width="19.3" height="19.3" rx="3" fill="#e4e4e4" stroke="#cfcfcf" stroke-width="1"/><path d="M365.95,1072.65 H376.34999999999997" stroke="#3a3a3a" stroke-width="3.2"/><path d="M371.15,1067.45 V1077.8500000000001" stroke="#3a3a3a" stroke-width="3.2"/><rect x="361.5" y="1108.0" width="19.3" height="19.3" rx="3" fill="#e4e4e4" stroke="#cfcfcf" stroke-width="1"/><path d="M365.95,1117.65 H376.34999999999997" stroke="#3a3a3a" stroke-width="3.2"/><path d="M371.15,1112.45 V1122.8500000000001" stroke="#3a3a3a" stroke-width="3.2"/><rect x="361.5" y="1152.0" width="19.3" height="19.3" rx="3" fill="#e4e4e4" stroke="#cfcfcf" stroke-width="1"/><path d="M365.95,1161.65 H376.34999999999997" stroke="#3a3a3a" stroke-width="3.2"/><path d="M371.15,1156.45 V1166.8500000000001" stroke="#3a3a3a" stroke-width="3.2"/><rect x="361.5" y="1222.0" width="19.3" height="19.3" rx="3" fill="#e4e4e4" stroke="#cfcfcf" stroke-width="1"/><path d="M365.95,1231.65 H376.34999999999997" stroke="#3a3a3a" stroke-width="3.2"/><path d="M371.15,1226.45 V1236.8500000000001" stroke="#3a3a3a" stroke-width="3.2"/></svg><svg style="position:absolute;left:140px;top:190px;" width="80" height="35" viewBox="140 190 80 35"><path fill="none" stroke="#3a72b8" stroke-width="3.4" stroke-linecap="round" d="M169.5,215.7 H159.95 A7.85,7.85 0 0 1 159.95,200 H167.35 A5.85,5.85 0 0 1 167.35,211.7 H160.4 A3.4,3.4 0 0 1 160.4,204.9 H168"/><path fill="#c9d9ea" stroke="#3a72b8" stroke-width="2.6" stroke-linejoin="round" d="M189.3,199.6 H207.3 V213.6 H199.5 L194,218.6 V213.6 H189.3 Z"/></svg><div style="left:0px;top:1375px;width:150px;height:14px;background:#f7f6f4;"></div><div style="left:150px;top:1375px;width:1255px;height:14px;background:#ffffff;"></div><div style="left:1414px;top:1375px;width:1052px;height:14px;background:#ffffff;"></div>
</div></body></html>
